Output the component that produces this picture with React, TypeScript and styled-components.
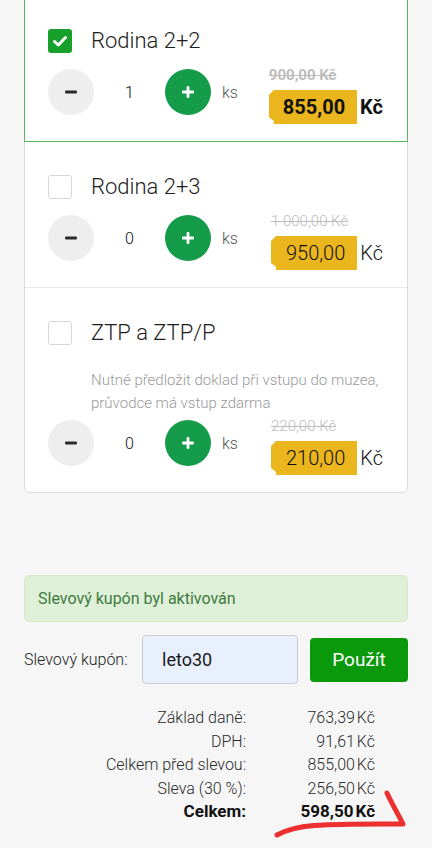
import React from 'react';
import styled, { createGlobalStyle } from 'styled-components';

const Global = createGlobalStyle`
  html { overflow: hidden; }
  body {
    margin: 0;
    padding: 0;
    background: #f6f6f6;
    font-family: Roboto, "Noto Sans", Arial, sans-serif;
    color: #222;
  }
`;

interface Ticket {
  name: string;
  count: number;
  oldPrice: string;
  price: string;
  note?: string;
  selected?: boolean;
}

const tickets: Ticket[] = [
  { name: 'Rodina 2+2', count: 1, oldPrice: '900,00 Kč', price: '855,00', selected: true },
  { name: 'Rodina 2+3', count: 0, oldPrice: '1 000,00 Kč', price: '950,00' },
  {
    name: 'ZTP a ZTP/P',
    count: 0,
    oldPrice: '220,00 Kč',
    price: '210,00',
    note: 'Nutné předložit doklad při vstupu do muzea, průvodce má vstup zdarma',
  },
];

const Page = styled.div`
  padding: 0 24px 24px;
`;

const Card = styled.div`
  margin-top: -5px;
  background: #fff;
  border: 1px solid #dcdcdc;
  border-radius: 6px;
`;

const Item = styled.div<{ $selected?: boolean }>`
  position: relative;
  padding: 33px 24px 17px 23px;
  & + & { border-top: 1px solid #e9e9e9; }
  ${p => p.$selected && `
    z-index: 1;
    box-shadow: 0 0 0 1px #5bb55e;
  `}
`;

const TitleRow = styled.div`
  display: flex;
  align-items: center;
  gap: 19px;
`;

const Check = styled.div<{ $on?: boolean }>`
  width: 24px;
  height: 24px;
  box-sizing: border-box;
  border-radius: 3px;
  display: flex;
  align-items: center;
  justify-content: center;
  background: ${p => (p.$on ? '#17a02c' : '#fff')};
  border: ${p => (p.$on ? 'none' : '1px solid #d8d8d8')};
`;

const Name = styled.div`
  font-size: 22px;
  line-height: 24px;
  font-weight: 300;
  color: #1d1d1d;
`;

const Note = styled.div`
  margin: 24px 0 0 43px;
  font-size: 15px;
  line-height: 23px;
  font-weight: 300;
  color: #9a9a9a;
`;

const Row = styled.div<{ $tight?: boolean }>`
  margin-top: ${p => (p.$tight ? '2px' : '13px')};
  display: flex;
  align-items: flex-start;
`;

const Stepper = styled.div`
  margin-top: 3px;
  display: flex;
  align-items: center;
`;

const Round = styled.div<{ $plus?: boolean }>`
  width: 46px;
  height: 46px;
  border-radius: 50%;
  display: flex;
  align-items: center;
  justify-content: center;
  background: ${p => (p.$plus ? '#159c4b' : '#eeeeee')};
`;

const Count = styled.div`
  width: 71px;
  text-align: center;
  font-size: 16px;
  font-weight: 300;
  color: #111;
`;

const Unit = styled.div`
  margin-left: 11px;
  font-size: 16px;
  font-weight: 300;
  color: #555;
`;

const PriceBox = styled.div`
  margin-left: auto;
  display: flex;
  flex-direction: column;
  align-items: flex-start;
`;

const OldPrice = styled.div<{ $bold?: boolean }>`
  font-size: 15px;
  line-height: 18px;
  color: #bdbdbd;
  font-weight: ${p => (p.$bold ? 700 : 300)};
  text-decoration: line-through;
`;

const TagRow = styled.div`
  margin-top: 6px;
  display: flex;
  align-items: center;
  gap: 3px;
`;

const Tag = styled.div<{ $bold?: boolean }>`
  height: 34px;
  display: flex;
  align-items: center;
  padding: 0 12px 0 ${p => (p.$bold ? '14px' : '15px')};
  background: #ebb61d;
  font-size: 20px;
  font-weight: ${p => (p.$bold ? 700 : 300)};
  color: #111;
  clip-path: polygon(5px 0, 100% 0, 100% 100%, 5px 100%, 5px calc(100% - 3px), 0 calc(100% - 7px), 0 5px);
`;

const Currency = styled.div<{ $bold?: boolean }>`
  font-size: 20px;
  font-weight: ${p => (p.$bold ? 700 : 300)};
  color: #111;
`;

const Alert = styled.div`
  margin-top: 82px;
  height: 47px;
  box-sizing: border-box;
  display: flex;
  align-items: center;
  padding: 0 13px;
  background: #dff0d8;
  border: 1px solid #d4e9cb;
  border-radius: 5px;
  color: #3e7a40;
  font-size: 16px;
`;

const CouponRow = styled.div`
  margin-top: 13px;
  display: flex;
  align-items: center;
`;

const CouponLabel = styled.div`
  font-size: 16px;
  font-weight: 300;
  color: #222;
  width: 118px;
`;

const CouponInput = styled.div`
  width: 156px;
  height: 49px;
  box-sizing: border-box;
  display: flex;
  align-items: center;
  padding-left: 19px;
  background: #e8f0fe;
  border: 1px solid #c9cdd4;
  border-radius: 4px;
  font-size: 18px;
  color: #1a1a1a;
`;

const ApplyButton = styled.div`
  margin-left: auto;
  width: 98px;
  height: 44px;
  display: flex;
  align-items: center;
  justify-content: center;
  background: #0a990a;
  border-radius: 4px;
  color: #fff;
  font-size: 19px;
`;

const Summary = styled.div`
  position: relative;
  margin-top: 22px;
  padding-bottom: 20px;
  display: grid;
  grid-template-columns: 1fr 129px;
  padding-right: 33px;
  font-size: 16px;
  font-weight: 300;
  line-height: 23.5px;
  color: #2a2a2a;
`;

const Cell = styled.div<{ $total?: boolean }>`
  text-align: right;
  ${p => p.$total && 'font-weight: 700; color: #111; font-size: 17px;'}
`;

const Scribble = styled.svg`
  position: absolute;
  left: 0;
  top: 0;
  pointer-events: none;
  overflow: visible;
`;

const CheckMark = () => (
  <svg width="16" height="16" viewBox="0 0 16 16">
    <path d="M2.5 8.5 L6.3 12 L13.5 4.5" fill="none" stroke="#fff" strokeWidth="3" strokeLinecap="round" strokeLinejoin="round" />
  </svg>
);

const Minus = () => (
  <svg width="14" height="14" viewBox="0 0 14 14">
    <rect x="1" y="5.5" width="12" height="3" rx="1" fill="#2b2b2b" />
  </svg>
);

const Plus = () => (
  <svg width="14" height="14" viewBox="0 0 14 14">
    <rect x="1" y="5.6" width="12" height="2.8" rx="1" fill="#fff" />
    <rect x="5.6" y="1" width="2.8" height="12" rx="1" fill="#fff" />
  </svg>
);

const summary = [
  ['Základ daně:', '763,39\u202FKč'],
  ['DPH:', '91,61\u202FKč'],
  ['Celkem před slevou:', '855,00\u202FKč'],
  ['Sleva (30 %):', '256,50\u202FKč'],
];

export default function App() {
  return (
    <Page>
      <Global />
      <Card>
        {tickets.map(t => (
          <Item key={t.name} $selected={t.selected}>
            <TitleRow>
              <Check $on={t.selected}>{t.selected && <CheckMark />}</Check>
              <Name>{t.name}</Name>
            </TitleRow>
            {t.note && <Note>{t.note}</Note>}
            <Row $tight={!!t.note}>
              <Stepper>
                <Round><Minus /></Round>
                <Count>{t.count}</Count>
                <Round $plus><Plus /></Round>
                <Unit>ks</Unit>
              </Stepper>
              <PriceBox>
                <OldPrice $bold={t.selected}>{t.oldPrice}</OldPrice>
                <TagRow>
                  <Tag $bold={t.selected}>{t.price}</Tag>
                  <Currency $bold={t.selected}>Kč</Currency>
                </TagRow>
              </PriceBox>
            </Row>
          </Item>
        ))}
      </Card>

      <Alert>Slevový kupón byl aktivován</Alert>

      <CouponRow>
        <CouponLabel>Slevový kupón:</CouponLabel>
        <CouponInput>leto30</CouponInput>
        <ApplyButton>Použít</ApplyButton>
      </CouponRow>

      <Summary>
        {summary.map(([label, value]) => (
          <React.Fragment key={label}>
            <Cell>{label}</Cell>
            <Cell>{value}</Cell>
          </React.Fragment>
        ))}
        <Cell $total>Celkem:</Cell>
        <Cell $total>598,50{'\u202F'}Kč</Cell>
        <Scribble width="384" height="140" viewBox="0 0 384 140">
          <path
            d="M253 129 C262 124 272 121 290 119.5 C320 117.5 350 118 379 118 C374 108 368 98 363 87"
            fill="none"
            stroke="#ec2f2f"
            strokeWidth="5"
            strokeLinecap="round"
            strokeLinejoin="round"
          />
        </Scribble>
      </Summary>
    </Page>
  );
}
